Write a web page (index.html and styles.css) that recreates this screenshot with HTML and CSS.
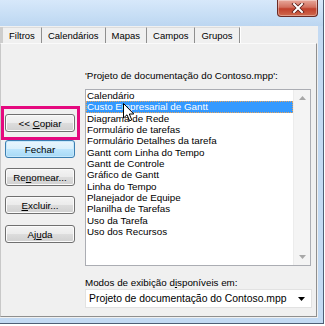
FILE: index.html
```html
<!DOCTYPE html>
<html lang="pt">
<head>
  <meta charset="UTF-8">
  <title>Organizador</title>
  <link rel="stylesheet" href="styles.css">
</head>
<body>
  <div class="window">
    <!-- barra de título -->
    <div class="titlebar">
      <div class="close-btn">
        <svg width="14" height="10" viewBox="0 0 14 10">
          <path d="M3 1 L11 9 M11 1 L3 9" stroke="#5a1e1a" stroke-width="3.6" stroke-linecap="square"/>
          <path d="M3 1 L11 9 M11 1 L3 9" stroke="#ffffff" stroke-width="2" stroke-linecap="square"/>
        </svg>
      </div>
    </div>

    <div class="client">
      <div class="tabs">
        <span class="tab-stub"></span>
        <span class="tab">Filtros</span>
        <span class="tab">Calendários</span>
        <span class="tab">Mapas</span>
        <span class="tab">Campos</span>
        <span class="tab">Grupos</span>
      </div>

      <div class="panel">
        <div class="actions">
          <div class="callout">
            <button class="btn">&lt;&lt; <u>C</u>opiar</button>
          </div>
          <button class="btn btn-default">Fechar</button>
          <button class="btn btn-spaced">Re<u>n</u>omear...</button>
          <button class="btn btn-spaced"><u>E</u>xcluir...</button>
          <button class="btn btn-spaced">Aj<u>u</u>da</button>
        </div>

        <div class="views">
          <div class="views-label">'Projeto de documentação do Contoso.mpp':</div>
          <div class="listbox">
            <ul class="list-items">
              <li>Calendário</li>
              <li class="selected">Custo Empresarial de Gantt</li>
              <li>Diagrama de Rede</li>
              <li>Formulário de tarefas</li>
              <li>Formulário Detalhes da tarefa</li>
              <li>Gantt com Linha do Tempo</li>
              <li>Gantt de Controle</li>
              <li>Gráfico de Gantt</li>
              <li>Linha do Tempo</li>
              <li>Planejador de Equipe</li>
              <li>Planilha de Tarefas</li>
              <li>Uso da Tarefa</li>
              <li>Uso dos Recursos</li>
            </ul>
            <div class="scrollbar">
              <svg width="7" height="4" viewBox="0 0 7 4"><path d="M0 4 L3.5 0 L7 4 Z" fill="#a8a8a8"/></svg>
              <svg width="7" height="4" viewBox="0 0 7 4"><path d="M0 0 L3.5 4 L7 0 Z" fill="#a8a8a8"/></svg>
            </div>
          </div>
          <div class="views-label views-label-bottom">Modos de exibição d<u>i</u>sponíveis em:</div>
          <div class="dropdown">
            <span>Projeto de documentação do Contoso.mpp</span>
            <svg width="7" height="4" viewBox="0 0 7 4"><path d="M0 0 L3.5 4 L7 0 Z" fill="#000"/></svg>
          </div>
        </div>
      </div>
    </div>

    <!-- ponteiro do mouse -->
    <svg class="mouse-cursor" width="12" height="19" viewBox="0 0 12 19">
      <path d="M0.5 0.5 L0.5 15 L4 11.8 L6.6 17.8 L8.8 16.9 L6.3 11 L10.8 11 Z" fill="#fff" stroke="#000" stroke-width="1" stroke-linejoin="round"/>
    </svg>
  </div>
</body>
</html>
```

FILE: styles.css
```css
/* base */
body {
  margin: 0;
  background-color: #ffffff;
  font-family: "Liberation Sans", Arial, sans-serif;
  font-size: 9.8px;
  color: #000000;
}

.window {
  position: relative;
  width: 323px;
  height: 323px;
  background-color: #c3daf3;
  border-right: 1px solid #4f5f76;
  border-bottom: 1px solid #4f5f76;
  display: flex;
  flex-direction: column;
}

/* barra de título */
.titlebar {
  height: 26px;
  flex-shrink: 0;
  background: linear-gradient(to bottom, #d7e8fa, #c4dcf4 70%, #bcd6f1);
  display: flex;
  justify-content: flex-end;
  align-items: flex-start;
  padding-right: 5px;
}

.close-btn {
  width: 39px;
  height: 16px;
  border: 1px solid #6b2b25;
  border-top: none;
  border-radius: 0 0 4px 4px;
  background: linear-gradient(to bottom, #e8a89b, #d2705f 45%, #c1402c 55%, #cf6a4e);
  box-shadow: inset 0 0 0 1px rgba(255, 255, 255, 0.35);
  display: flex;
  justify-content: center;
  align-items: center;
}

.client {
  flex: 1;
  margin: 0 5px 5px 0;
  padding: 0 1px 1px 0;
  background-color: #f0f0f0;
  display: flex;
  flex-direction: column;
}

/* abas */
.tabs {
  height: 17px;
  flex-shrink: 0;
  display: flex;
  align-items: flex-end;
}

.tab-stub {
  width: 3px;
  height: 16px;
  background-color: #cdcdcd;
}

.tab {
  height: 16px;
  line-height: 15px;
  padding: 0 6px;
  font-size: 9.5px;
  border-top: 1px solid #dcdcdc;
  border-right: 1px solid #8f8f8f;
  box-shadow: 1px 0 0 #ffffff;
  box-sizing: border-box;
  background-color: #f0f0f0;
}

.panel {
  flex: 1;
  display: flex;
  border-top: 1px solid #fafafa;
  border-left: 1px solid #c8c8c8;
  border-right: 1px solid #8f8f8f;
  border-bottom: 1px solid #8f8f8f;
}

/* botões da esquerda */
.actions {
  width: 84px;
  padding-top: 62px;
  display: flex;
  flex-direction: column;
  align-items: flex-start;
}

.callout {
  border: 3px solid #e5097f;
  padding: 5px 2px 5px 1px;
}

.btn {
  width: 70px;
  height: 18px;
  padding: 0;
  font-family: "Liberation Sans", Arial, sans-serif;
  font-size: 9.8px;
  color: #000000;
  border: 1px solid #707070;
  border-radius: 3px;
  background: linear-gradient(to bottom, #f4f4f4, #ebebeb 50%, #dddddd 50%, #d0d0d0);
  box-shadow: inset 0 0 0 1px #fbfbfb;
  margin-left: 4px;
}

.callout .btn {
  margin-left: 0;
}

.btn-default {
  border-color: #3c7fb1;
  background: linear-gradient(to bottom, #eaf6fd, #d9f0fc 50%, #bee6fd 50%, #a7d9f5);
  box-shadow: inset 0 0 0 1px #c5e8fc;
}

.btn-spaced {
  margin-top: 10px;
}

.btn-spaced:last-child {
  margin-top: 11px;
}

/* lista de modos */
.views {
  padding-top: 25px;
  display: flex;
  flex-direction: column;
}

.views-label {
  line-height: 13px;
  height: 13px;
  margin-bottom: 7px;
}

.views-label-bottom {
  margin-top: 10px;
  margin-bottom: 0;
}

.listbox {
  width: 226px;
  height: 177px;
  box-sizing: border-box;
  border: 1px solid #abadb3;
  background-color: #ffffff;
  display: flex;
}

.list-items {
  flex: 1;
  list-style: none;
  margin: 0;
  padding: 0;
}

.list-items li {
  height: 11.33px;
  line-height: 11.33px;
  padding-left: 1px;
  white-space: nowrap;
}

.list-items li.selected {
  background-color: #3399ff;
  color: #ffffff;
  outline: 1px dotted #e6a35c;
  outline-offset: -1px;
}

.scrollbar {
  width: 16px;
  border-left: 1px solid #ececec;
  background-color: #f4f4f4;
  display: flex;
  flex-direction: column;
  justify-content: space-between;
  align-items: center;
  padding: 6px 0 6px;
}

.dropdown {
  width: 227px;
  height: 19px;
  box-sizing: border-box;
  border: 1px solid #e2e2e2;
  background-color: #ffffff;
  display: flex;
  align-items: center;
  justify-content: space-between;
  padding: 0 6px 0 3px;
  font-size: 10.4px;
}

.mouse-cursor {
  position: absolute;
  left: 123px;
  top: 103px;
}
```
